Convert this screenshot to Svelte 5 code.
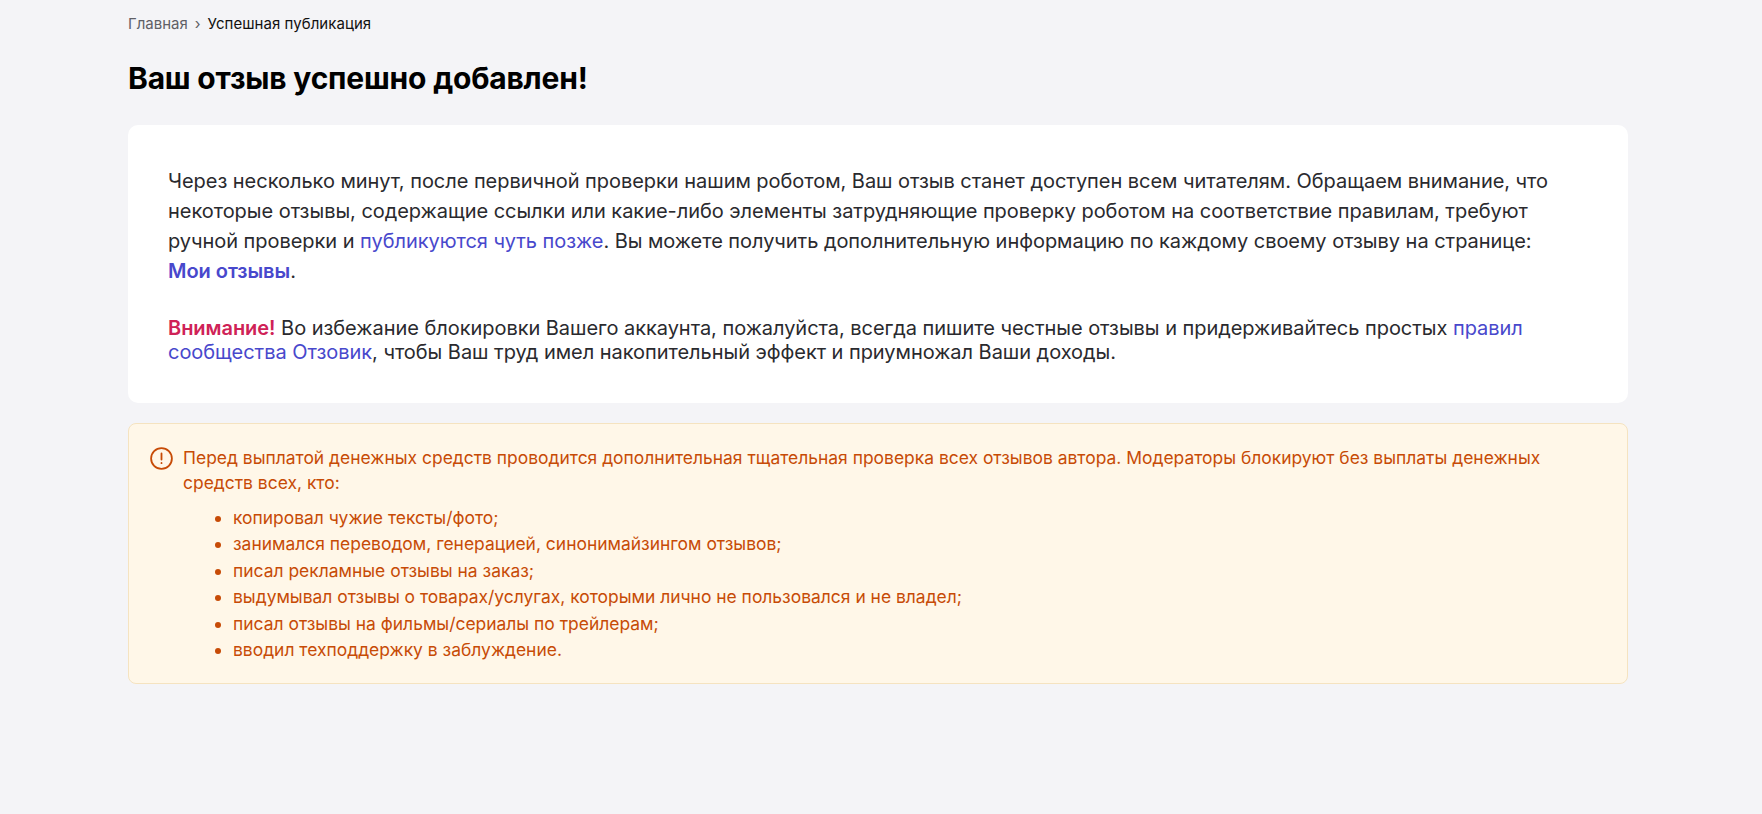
<script>
  const items = [
    'копировал чужие тексты/фото;',
    'занимался переводом, генерацией, синонимайзингом отзывов;',
    'писал рекламные отзывы на заказ;',
    'выдумывал отзывы о товарах/услугах, которыми лично не пользовался и не владел;',
    'писал отзывы на фильмы/сериалы по трейлерам;',
    'вводил техподдержку в заблуждение.'
  ];
</script>

<main class="page">
  <nav class="crumbs">
    <span class="home">Главная</span>
    <span class="sep">›</span>
    <span class="current">Успешная публикация</span>
  </nav>
  <h1>Ваш отзыв успешно добавлен!</h1>
  <section class="card">
    <p class="lead">Через несколько минут, после первичной проверки нашим роботом, Ваш отзыв станет доступен всем читателям. Обращаем внимание, что некоторые отзывы, содержащие ссылки или какие-либо элементы затрудняющие проверку роботом на соответствие правилам, требуют ручной проверки и <a href="#a">публикуются чуть позже</a>. Вы можете получить дополнительную информацию по каждому своему отзыву на странице: <a href="#b" class="strong">Мои отзывы</a>.</p>
    <p class="note"><b>Внимание!</b> Во избежание блокировки Вашего аккаунта, пожалуйста, всегда пишите честные отзывы и придерживайтесь простых <a href="#c">правил сообщества Отзовик</a>, чтобы Ваш труд имел накопительный эффект и приумножал Ваши доходы.</p>
  </section>
  <section class="alert">
    <svg class="icon" width="23" height="23" viewBox="0 0 23 23" fill="none" stroke="currentColor" stroke-width="1.8" stroke-linecap="round">
      <circle cx="11.5" cy="11.5" r="10.4" />
      <path d="M11.5 6.5v6M11.5 16v.2" />
    </svg>
    <div class="body">
      <p>Перед выплатой денежных средств проводится дополнительная тщательная проверка всех отзывов автора. Модераторы блокируют без выплаты денежных средств всех, кто:</p>
      <ul>
        {#each items as item}
          <li>{item}</li>
        {/each}
      </ul>
    </div>
  </section>
</main>

<style>
  :global(body) {
    background: #f4f4f7;
    font-family: Inter, "Noto Sans", sans-serif;
    padding-right: 6px;
  }
  .page {
    width: 1500px;
    margin: 0 auto;
    padding: 15px 0 0;
    box-sizing: border-box;
  }
  .crumbs {
    display: flex;
    gap: 7px;
    font-size: 15px;
    line-height: 18px;
    align-items: center;
  }
  .home, .sep { color: #5f6066; }
  .current { color: #111; letter-spacing: 0.05px; }
  h1 {
    margin: 26px 0 0;
    font-size: 30px;
    line-height: 38px;
    font-weight: 700;
    letter-spacing: -0.2px;
    color: #000;
  }
  .card {
    margin-top: 28px;
    background: #fff;
    border-radius: 10px;
    padding: 41px 40px 39px;
    font-size: 20px;
    letter-spacing: -0.04px;
    color: #2a2a2e;
  }
  .card p { margin: 0; }
  .lead { line-height: 30px; }
  .note { margin-top: 30px !important; line-height: 24px; }
  .note b { color: #cf2257; font-weight: 600; }
  a { color: #4848cc; text-decoration: none; }
  a.strong { font-weight: 600; white-space: nowrap; }
  .alert {
    margin-top: 20px;
    display: flex;
    gap: 10px;
    background: #fff7e8;
    border: 1px solid #f5e3c0;
    border-radius: 8px;
    padding: 21px 20px 20px 21px;
    color: #c74b06;
    font-size: 17.45px;
    line-height: 25px;
  }
  .icon { flex: none; margin-top: 2px; }
  .alert p { margin: 0; }
  .alert ul { margin: 10px 0 0; padding: 0 0 0 50px; }
  .alert li { line-height: 26.4px; }
</style>
